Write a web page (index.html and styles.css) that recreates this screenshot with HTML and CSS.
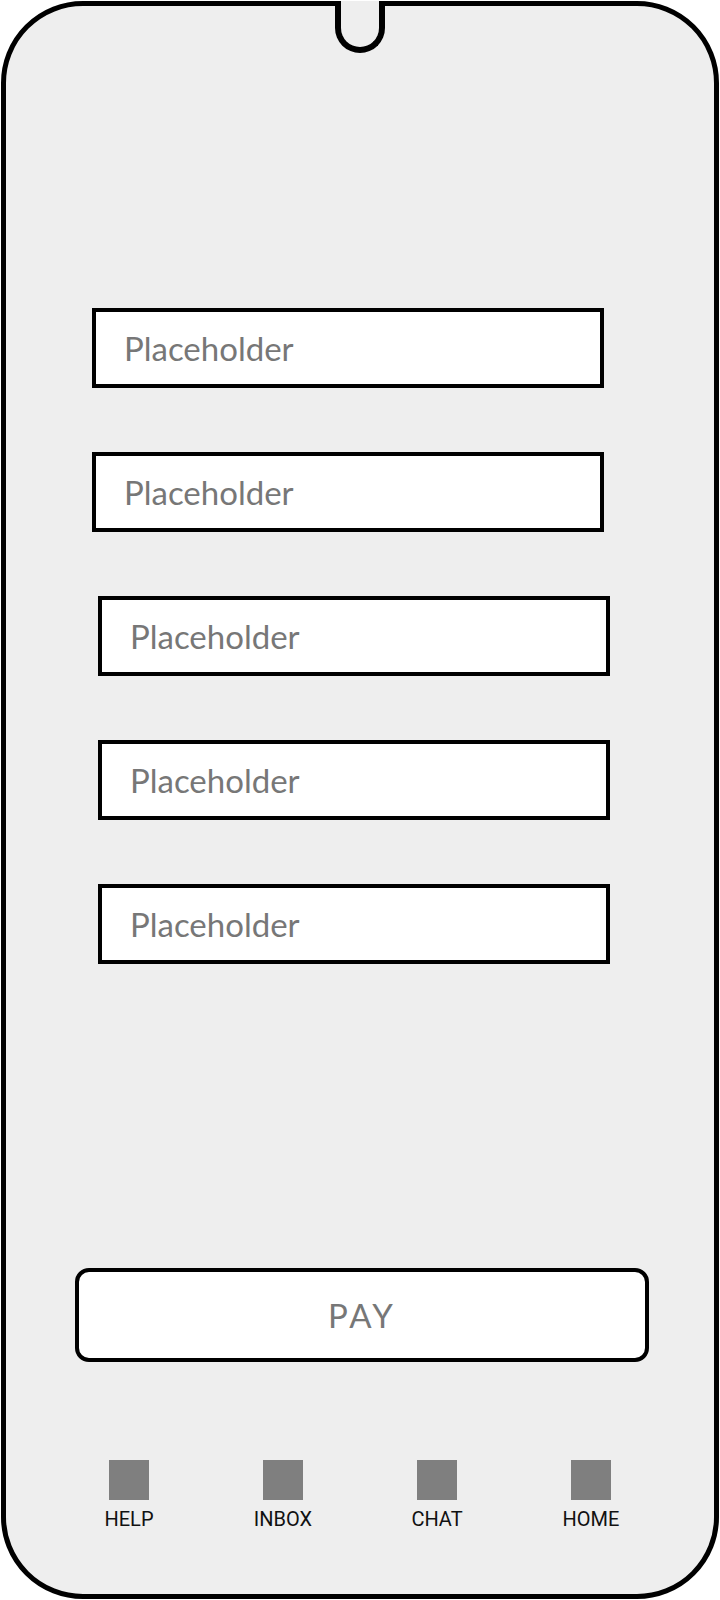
FILE: index.html
```html
<!DOCTYPE html>
<html lang="en">
<head>
<meta charset="utf-8">
<title>Payment</title>
<link rel="stylesheet" href="styles.css">
</head>
<body>
<div class="phone">
  <div class="notch"></div>
  <div class="fields">
    <div class="field">Placeholder</div>
    <div class="field">Placeholder</div>
    <div class="field field--shift">Placeholder</div>
    <div class="field field--shift">Placeholder</div>
    <div class="field field--shift">Placeholder</div>
  </div>
  <div class="pay">PAY</div>
  <nav class="tabs">
    <div class="tab"><span class="tab-icon"></span><span class="tab-label">HELP</span></div>
    <div class="tab"><span class="tab-icon"></span><span class="tab-label">INBOX</span></div>
    <div class="tab"><span class="tab-icon"></span><span class="tab-label">CHAT</span></div>
    <div class="tab"><span class="tab-icon"></span><span class="tab-label">HOME</span></div>
  </nav>
</div>
</body>
</html>
```
FILE: styles.css
```css
* { box-sizing: border-box; }

html, body {
  margin: 0;
  padding: 0;
  background: #ffffff;
}

.phone {
  position: relative;
  margin: 1px;
  width: 718px;
  height: 1598px;
  border: 5px solid #000;
  border-radius: 82px;
  background: #eeeeee;
  display: flex;
  flex-direction: column;
}

.notch {
  position: absolute;
  top: -5px;
  left: 329px;
  width: 50px;
  height: 52px;
  border: 6px solid #000;
  border-top: 0;
  border-radius: 0 0 25px 25px;
  background: #eeeeee;
}

.fields {
  margin-top: 302px;
  display: flex;
  flex-direction: column;
  gap: 64px;
}

.field {
  margin-left: 86px;
  width: 512px;
  height: 80px;
  border: 4px solid #000;
  background: #fff;
  padding-left: 28px;
  display: flex;
  align-items: center;
  font-family: "Comic Sans MS", Lato, sans-serif;
  font-size: 33px;
  color: #777777;
}

.field--shift {
  margin-left: 92px;
}

.pay {
  margin-top: 304px;
  margin-left: 69px;
  width: 574px;
  height: 94px;
  border: 4px solid #000;
  border-radius: 14px;
  background: #fff;
  display: flex;
  align-items: center;
  justify-content: center;
  font-family: "Comic Sans MS", Lato, sans-serif;
  font-size: 33px;
  letter-spacing: 3px;
  color: #777777;
}

.tabs {
  margin-top: 98px;
  margin-left: 46px;
  display: grid;
  grid-template-columns: repeat(4, 154px);
}

.tab {
  display: flex;
  flex-direction: column;
  align-items: center;
}

.tab-icon {
  width: 40px;
  height: 40px;
  background: #7f7f7f;
}

.tab-label {
  margin-top: 9px;
  font-family: Roboto, "Liberation Sans", sans-serif;
  font-size: 20px;
  line-height: 20px;
  color: #111;
}
```
